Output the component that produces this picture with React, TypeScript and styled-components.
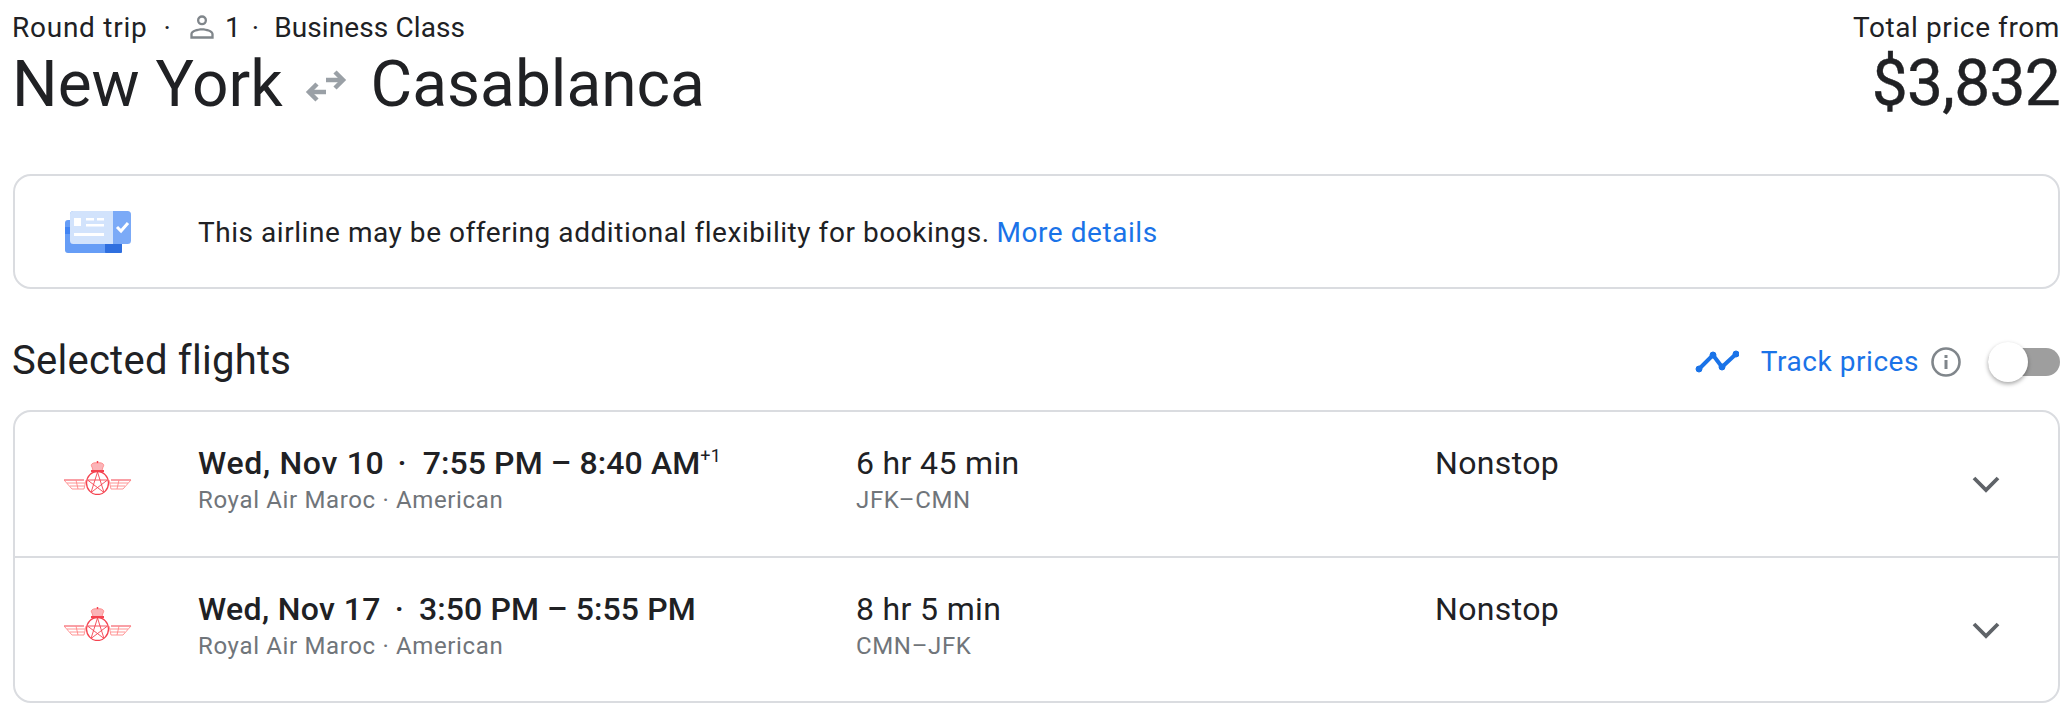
import React from "react";
import styled, { createGlobalStyle } from "styled-components";

const Global = createGlobalStyle`
  html, body { margin: 0; padding: 0; background: #fff; }
  body { font-family: Roboto, "Noto Sans", sans-serif; color: #202124; }
`;

const Page = styled.div`
  width: 2072px;
  height: 718px;
  box-sizing: border-box;
  padding: 0 12px 0 13px;
  overflow: hidden;
`;

const Header = styled.header`
  display: flex;
  justify-content: space-between;
  height: 174px;
`;

const Trip = styled.div`
  display: flex;
  flex-direction: column;
  margin-left: -1px;
`;

const MetaLine = styled.div`
  display: flex;
  align-items: center;
  height: 54px;
  font-size: 28px;
  letter-spacing: 0.1px;
`;

const TripKind = styled.span`
  letter-spacing: 0.75px;
`;

const PriceLabel = styled(MetaLine)`
  letter-spacing: 0.6px;
`;

const Dot = styled.span<{ $l: number; $r: number }>`
  margin: 0 ${(p) => p.$r}px 0 ${(p) => p.$l}px;
`;

const PersonIcon = styled.svg`
  margin: 0 9px 0 -1px;
`;

const Route = styled.h1`
  display: flex;
  align-items: center;
  margin: 0;
  height: 60px;
  font-size: 64px;
  font-weight: 400;
`;

const RouteIcon = styled.svg`
  margin: 4px 24px 0 22px;
`;

const Price = styled.div`
  display: flex;
  flex-direction: column;
  align-items: flex-end;
`;

const PriceValue = styled.div`
  height: 60px;
  line-height: 60px;
  font-size: 64px;
  letter-spacing: -0.7px;
  -webkit-text-stroke: 0.4px #202124;
`;

const Card = styled.section`
  border: 2px solid #dadce0;
  border-radius: 18px;
  box-sizing: border-box;
`;

const Notice = styled(Card)`
  display: flex;
  align-items: center;
  height: 115px;
  padding: 2px 0 0 50px;
  font-size: 28px;
  letter-spacing: 0.55px;
`;

const NoticeIcon = styled.svg`
  margin: -2px 67px 0 0;
  flex: none;
`;

const Link = styled.a`
  color: #1a73e8;
  margin-left: 7px;
`;

const SectionBar = styled.div`
  display: flex;
  align-items: center;
  justify-content: space-between;
  box-sizing: border-box;
  height: 121px;
  padding-top: 24px;
`;

const SectionTitle = styled.h2`
  margin: 0 0 2px -1px;
  font-size: 40px;
  font-weight: 400;
  letter-spacing: 0.25px;
`;

const Track = styled.div`
  display: flex;
  align-items: center;
  color: #1a73e8;
  font-size: 28px;
  letter-spacing: 0.55px;
`;

const TrackIcon = styled.svg`
  margin-right: 22px;
`;

const InfoIcon = styled.svg`
  margin: 0 27px 0 12px;
`;

const Switch = styled.div`
  position: relative;
  width: 72px;
  height: 28px;
  border-radius: 14px;
  background: #9e9e9e;
`;

const Knob = styled.div`
  position: absolute;
  left: 0;
  top: -6px;
  width: 40px;
  height: 40px;
  border-radius: 50%;
  background: #fff;
  box-shadow: 0 2px 4px rgba(0, 0, 0, 0.35);
`;

const Flights = styled(Card)`
  height: 293px;
`;

const Row = styled.div`
  display: grid;
  grid-template-columns: 183px 658px 579px 1fr 86px;
  align-items: start;
  height: 144px;
  box-sizing: border-box;
  padding-top: 33px;
  & + & {
    height: 145px;
    border-top: 2px solid #dadce0;
  }
`;

const LogoCell = styled.div`
  padding: 16px 0 0 49px;
`;

const Title = styled.div`
  font-size: 32px;
  line-height: 36px;
  font-weight: 500;
  letter-spacing: 0.1px;
  white-space: nowrap;
`;

const DateText = styled.span<{ $track: number }>`
  letter-spacing: ${(p) => p.$track}px;
`;

const TitleDot = styled.span<{ $l: number; $r: number }>`
  margin: 0 ${(p) => p.$r}px 0 ${(p) => p.$l}px;
`;

const Sup = styled.sup`
  font-size: 18px;
  font-weight: 400;
  line-height: 0;
  vertical-align: 12px;
`;

const Sub = styled.div`
  margin-top: 1px;
  font-size: 24px;
  line-height: 36px;
  color: #70757a;
  letter-spacing: 0.65px;
`;

const Plain = styled.div`
  font-size: 32px;
  line-height: 36px;
  letter-spacing: 0.35px;
  white-space: nowrap;
`;

const ChevronCell = styled.div`
  padding-top: 30px;
`;

const Swap = () => (
  <RouteIcon width="42" height="34" viewBox="0 0 42 34" fill="none" stroke="#9aa0a6" strokeWidth="4.5">
    <path d="M12 31 4 23l8-8" />
    <path d="M4 23h17" />
    <path d="M30 3l8 8-8 8" />
    <path d="M38 11H21" />
  </RouteIcon>
);

const Person = () => (
  <PersonIcon width="28" height="28" viewBox="0 0 24 24" fill="#80868b">
    <path d="M12 2a4.3 4.3 0 1 1 0 8.6A4.3 4.3 0 0 1 12 2zm0 2a2.3 2.3 0 1 0 0 4.6A2.3 2.3 0 0 0 12 4zm0 9c4 0 10 1.8 10 5v4H2v-4c0-3.2 6-5 10-5zm0 2c-3.5 0-8 1.5-8 3v2h16v-2c0-1.500-4.500-3-8-3z" />
  </PersonIcon>
);

const FlexIcon = () => (
  <NoticeIcon width="66" height="42" viewBox="0 0 66 42">
    <rect x="0" y="9" width="57" height="33" rx="3" fill="#669df6" />
    <rect x="40" y="30" width="17" height="12" rx="1" fill="#2f6fdf" />
    <rect x="5" y="0" width="61" height="33" rx="3.500" fill="#7baaf7" />
    <path d="M8.500 0H48v33H8.500A3.500 3.500 0 0 1 5 29.500V3.500A3.500 3.500 0 0 1 8.500 0z" fill="#d2e3fc" />
    <rect x="0" y="16" width="5" height="7" fill="#4285f4" />
    <rect x="9" y="7" width="7" height="8" fill="#fff" />
    <rect x="21" y="7" width="8" height="2.500" fill="#fff" />
    <rect x="32" y="7" width="7" height="2.500" fill="#fff" />
    <rect x="21" y="13" width="18" height="2.500" fill="#fff" />
    <rect x="9" y="22" width="30" height="3" fill="#fff" />
    <path d="M52 16l4 4 7-8" fill="none" stroke="#fff" strokeWidth="3" />
  </NoticeIcon>
);

const TrendIcon = () => (
  <TrackIcon width="44" height="24" viewBox="0 0 44 24" fill="#1a73e8" stroke="#1a73e8">
    <path d="M4 19 18 5l9 12L41 4" fill="none" strokeWidth="4" />
    <circle cx="4" cy="19" r="3" />
    <circle cx="18" cy="5" r="3" />
    <circle cx="27" cy="17" r="3" />
    <circle cx="41" cy="4" r="3" />
  </TrackIcon>
);

const Info = () => (
  <InfoIcon width="30" height="30" viewBox="0 0 30 30">
    <circle cx="15" cy="15" r="13.500" fill="none" stroke="#80868b" strokeWidth="2.600" />
    <rect x="13.500" y="13" width="3" height="9" fill="#80868b" />
    <rect x="13.500" y="8" width="3" height="3" fill="#80868b" />
  </InfoIcon>
);

const Logo = () => (
  <svg width="68" height="34" viewBox="0 0 68 34" fill="none" stroke="#f4424f" strokeWidth="0.9">
    <ellipse cx="33.500" cy="22" rx="11" ry="11.500" strokeWidth="1.300" />
    <path d="M33.500 11 40 31.500 23.500 19h20L27 31.500z" />
    <path d="M28 6c-2.500-3 2-5 5.500-4 3.500-1 8 1 5.500 4l-1 3.500h-9z" fill="#fbb4b8" stroke="#f88" />
    <rect x="27" y="9" width="13" height="2" fill="#f4424f" stroke="none" />
    <path d="M33.500 0v2" strokeWidth="1.500" />
    <path d="M0 19h20M67 19H47" strokeWidth="1.200" />
    <path stroke="#f88" d="M0 19l8 9h12l2-9M67 19l-8 9H47l-2-9M3 22h18M64 22H46M6 25h14M61 25H47M12 19l2 9M55 19l-2 9" />
  </svg>
);

const Chevron = () => (
  <svg width="28" height="18" viewBox="0 0 28 18" fill="none" stroke="#5f6368" strokeWidth="3.800">
    <path d="M2 3l12 12L26 3" />
  </svg>
);

type FlightProps = {
  date: string;
  track: number;
  dotL: number;
  dotR: number;
  times: string;
  plus?: string;
  dur: string;
  route: string;
};

const FlightRow = ({ date, track, dotL, dotR, times, plus, dur, route }: FlightProps) => (
  <Row>
    <LogoCell><Logo /></LogoCell>
    <div>
      <Title>
        <DateText $track={track}>{date}</DateText>
        <TitleDot $l={dotL} $r={dotR}>·</TitleDot>
        {times}
        {plus && <Sup>{plus}</Sup>}
      </Title>
      <Sub>Royal Air Maroc · American</Sub>
    </div>
    <div>
      <Plain>{dur}</Plain>
      <Sub>{route}</Sub>
    </div>
    <div>
      <Plain>Nonstop</Plain>
    </div>
    <ChevronCell><Chevron /></ChevronCell>
  </Row>
);

export default function App() {
  return (
    <Page>
      <Global />
      <Header>
        <Trip>
          <MetaLine>
            <TripKind>Round trip</TripKind>
            <Dot $l={16} $r={18}>·</Dot>
            <Person />
            1
            <Dot $l={11} $r={15}>·</Dot>
            Business Class
          </MetaLine>
          <Route>
            New York
            <Swap />
            Casablanca
          </Route>
        </Trip>
        <Price>
          <PriceLabel>Total price from</PriceLabel>
          <PriceValue>$3,832</PriceValue>
        </Price>
      </Header>
      <Notice>
        <FlexIcon />
        This airline may be offering additional flexibility for bookings.
        <Link>More details</Link>
      </Notice>
      <SectionBar>
        <SectionTitle>Selected flights</SectionTitle>
        <Track>
          <TrendIcon />
          Track prices
          <Info />
          <Switch><Knob /></Switch>
        </Track>
      </SectionBar>
      <Flights>
        <FlightRow date="Wed, Nov 10" track={0.7} dotL={13} dotR={16} times="7:55 PM – 8:40 AM" plus="+1" dur="6 hr 45 min" route="JFK–CMN" />
        <FlightRow date="Wed, Nov 17" track={0.36} dotL={14} dotR={15} times="3:50 PM – 5:55 PM" dur="8 hr 5 min" route="CMN–JFK" />
      </Flights>
    </Page>
  );
}
